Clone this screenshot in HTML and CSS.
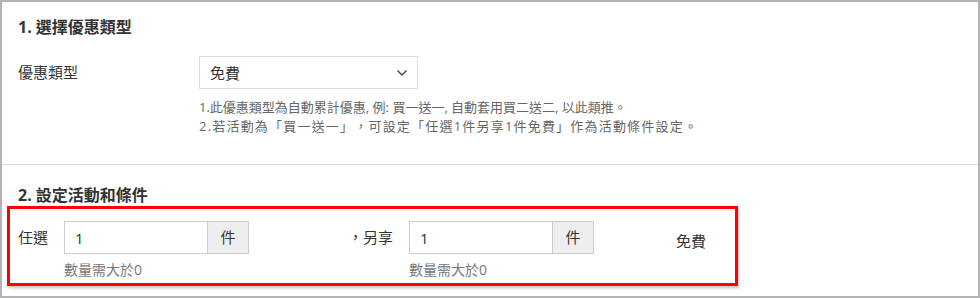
FILE: index.html
```html
<!DOCTYPE html>
<html>
<head>
    <title>優惠設定</title>
    <link rel="stylesheet" href="styles.css">
</head>
<body>
    <div class="panel">
        <div class="section first">
            <h3>1. 選擇優惠類型</h3>
            <div class="form-row">
                <label class="row-label">優惠類型</label>
                <div class="row-body">
                    <div class="select">
                        <span>免費</span>
                        <svg class="chevron" width="12" height="8" viewBox="0 0 12 8">
                            <path d="M1.5 1.5 L6 6 L10.5 1.5" fill="none" stroke="#444" stroke-width="1.4"/>
                        </svg>
                    </div>
                    <p class="help">1.此優惠類型為自動累計優惠, 例: 買一送一, 自動套用買二送二, 以此類推。<br><span class="wide">2.若活動為「買一送一」，可設定「任選1件另享1件免費」作為活動條件設定。</span></p>
                </div>
            </div>
        </div>
        <div class="section second">
            <h3>2. 設定活動和條件</h3>
            <div class="highlight">
                <div class="condition">
                    <span class="cond-label">任選</span>
                    <div class="field">
                        <div class="input-group">
                            <input type="text" value="1">
                            <span class="addon">件</span>
                        </div>
                        <div class="hint">數量需大於0</div>
                    </div>
                    <span class="cond-label extra">，另享</span>
                    <div class="field">
                        <div class="input-group">
                            <input type="text" value="1">
                            <span class="addon">件</span>
                        </div>
                        <div class="hint">數量需大於0</div>
                    </div>
                    <span class="result">免費</span>
                </div>
            </div>
        </div>
    </div>
</body>
</html>
```

FILE: styles.css
```css
body {
    margin: 0;
    font-family: "Open Sans", "Noto Sans CJK TC", sans-serif;
    font-size: 15px;
    color: #333;
    background-color: #ffffff;
}
.panel {
    height: 298px;
    box-sizing: border-box;
    border: 2px solid #b3b3b3;
    background-color: #ffffff;
}
.section {
    padding: 0 16px;
}
.section.first {
    padding-top: 14px;
    padding-bottom: 28px;
    border-bottom: 1px solid #dddddd;
}
.section.second {
    padding: 19px 0 0 5px;
}
h3 {
    margin: 0;
    font-size: 16px;
    line-height: 22px;
    font-weight: bold;
}
.section.second h3 {
    padding-left: 11px;
}
.form-row {
    display: flex;
    margin-top: 18px;
}
.row-label {
    width: 181px;
    line-height: 33px;
}
.select {
    width: 219px;
    height: 33px;
    box-sizing: border-box;
    border: 1px solid #dddddd;
    padding: 0 9px 0 10px;
    display: flex;
    align-items: center;
    justify-content: space-between;
}
.help {
    margin: 9px 0 0;
    font-size: 13px;
    line-height: 19px;
    color: #666;
    text-spacing-trim: space-all;
}
.help .wide {
    letter-spacing: 1.2px;
}
.highlight {
    width: 731px;
    box-sizing: border-box;
    border: 3px solid #ff0000;
    padding: 12px 0 3px 8px;
    box-shadow: 1px 2px 3px rgba(0, 0, 0, 0.25);
}
.condition {
    display: flex;
    align-items: flex-start;
}
.cond-label {
    width: 46px;
    line-height: 33px;
}
.cond-label.extra {
    width: 160px;
    padding-right: 16px;
    box-sizing: border-box;
    text-align: right;
}
.input-group {
    display: flex;
    height: 33px;
}
.input-group input {
    width: 143px;
    height: 33px;
    box-sizing: border-box;
    border: 1px solid #cccccc;
    border-right: none;
    padding: 0 10px;
    font-family: inherit;
    font-size: 15px;
    color: #333;
    outline: none;
}
.addon {
    width: 42px;
    box-sizing: border-box;
    border: 1px solid #cccccc;
    background-color: #eeeeee;
    text-align: center;
    line-height: 31px;
}
.hint {
    margin-top: 6px;
    font-size: 14px;
    line-height: 20px;
    color: #777;
}
.result {
    margin-left: 82px;
    line-height: 41px;
}
```
